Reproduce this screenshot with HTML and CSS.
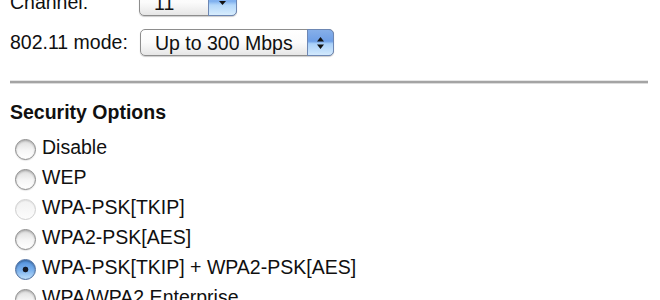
FILE: index.html
```html
<!DOCTYPE html>
<html lang="en">
<head>
    <meta charset="UTF-8">
    <meta name="viewport" content="width=device-width, initial-scale=1.0">
    <title>Wireless Settings</title>
    <link rel="stylesheet" href="styles.css">
</head>
<body>
    <section class="panel">
        <div class="fields">
            <label for="channelInput">Channel:</label>
            <span class="select select-channel">
                <select id="channelInput">
                    <option>11</option>
                </select>
                <span class="select-btn">
                    <svg width="9" height="6" viewBox="0 0 9 6"><path d="M1 1h7L4.5 5z" fill="#111"/></svg>
                </span>
            </span>

            <label for="modeInput">802.11 mode:</label>
            <span class="select select-mode">
                <select id="modeInput">
                    <option>Up to 300 Mbps</option>
                </select>
                <span class="select-btn">
                    <svg width="9" height="14" viewBox="0 0 9 14"><path d="M4.5 1L8 5.5H1z M4.5 13L8 8.5H1z" fill="#111"/></svg>
                </span>
            </span>
        </div>

        <hr class="divider">

        <h3 class="section-title">Security Options</h3>
        <ul class="options">
            <li><label><input type="radio" name="security"> Disable</label></li>
            <li><label><input type="radio" name="security"> WEP</label></li>
            <li><label><input type="radio" name="security" disabled> WPA-PSK[TKIP]</label></li>
            <li><label><input type="radio" name="security"> WPA2-PSK[AES]</label></li>
            <li><label><input type="radio" name="security" checked> WPA-PSK[TKIP] + WPA2-PSK[AES]</label></li>
            <li><label><input type="radio" name="security"> WPA/WPA2 Enterprise</label></li>
        </ul>
    </section>
</body>
</html>
```

FILE: styles.css
```css
body {
    font-family: "Liberation Sans", Arial, sans-serif;
    font-size: 19.5px;
    color: #101010;
    margin: 0;
    padding: 0;
    background-color: #fff;
    overflow: hidden;
}

.panel {
    margin-top: -11px;
    padding: 0 12px 0 10px;
}

.fields {
    display: grid;
    grid-template-columns: 129px auto;
    row-gap: 13px;
    align-items: center;
    justify-items: start;
}

.select {
    position: relative;
    display: inline-block;
    height: 27px;
}

.select-channel {
    width: 98px;
}

.select-mode {
    width: 194px;
    margin-left: 1px;
}

.select select {
    appearance: none;
    -webkit-appearance: none;
    width: 100%;
    height: 100%;
    margin: 0;
    padding: 0 0 0 14px;
    font: inherit;
    color: #101010;
    border: 1px solid #8d8d8d;
    border-radius: 5px;
    background: linear-gradient(#ffffff, #fbfbfb 50%, #e6e6e6);
    box-shadow: 0 1px 1px rgba(0, 0, 0, 0.2);
}

.select-btn {
    position: absolute;
    top: 0;
    right: 0;
    bottom: 0;
    width: 27px;
    display: flex;
    align-items: center;
    justify-content: center;
    border: 1px solid #6d87b3;
    border-radius: 0 5px 5px 0;
    background: linear-gradient(#86afe9, #6e9fe6 45%, #a9d0f8 55%, #d2e9fd);
    pointer-events: none;
    box-sizing: border-box;
}

.select-channel .select-btn {
    width: 29px;
    background: linear-gradient(#a6c8f2, #7eafee 45%, #b3d7fa 60%, #d8edfd);
}

.divider {
    border: none;
    height: 2px;
    background-color: #a4a4a4;
    box-shadow: 0 1px 0 #dcdcdc, 0 -1px 0 #e6e6e6;
    margin: 25px 0 0;
}

.section-title {
    font-size: 19.5px;
    line-height: 24px;
    margin: 17px 0 8px;
}

.options {
    list-style: none;
    margin: 0;
    padding: 0;
}

.options li {
    height: 30px;
    display: flex;
    align-items: center;
}

.options label {
    display: flex;
    align-items: center;
    gap: 6px;
    white-space: nowrap;
}

.options input[type="radio"] {
    appearance: none;
    -webkit-appearance: none;
    width: 21px;
    height: 21px;
    margin: 4px 0 0 5px;
    border-radius: 50%;
    border: 1px solid #8a8a8a;
    background: linear-gradient(#dcdcdc, #f6f6f6 55%, #ffffff);
    box-shadow: inset 0 1px 2px rgba(0, 0, 0, 0.25), 0 1px 1px rgba(0, 0, 0, 0.1);
    box-sizing: border-box;
}

.options input[type="radio"]:disabled {
    border-color: #cfcfcf;
    background: linear-gradient(#f1f1f1, #fcfcfc);
    box-shadow: inset 0 1px 1px rgba(0, 0, 0, 0.08);
}

.options input[type="radio"]:checked {
    border-color: #4a6c9e;
    background:
        radial-gradient(circle, #151a26 0 2.5px, transparent 3.2px),
        linear-gradient(#4f8fdc, #7cb2ee 55%, #bfe0fb);
    box-shadow: inset 0 1px 2px rgba(0, 0, 0, 0.35);
}
```
